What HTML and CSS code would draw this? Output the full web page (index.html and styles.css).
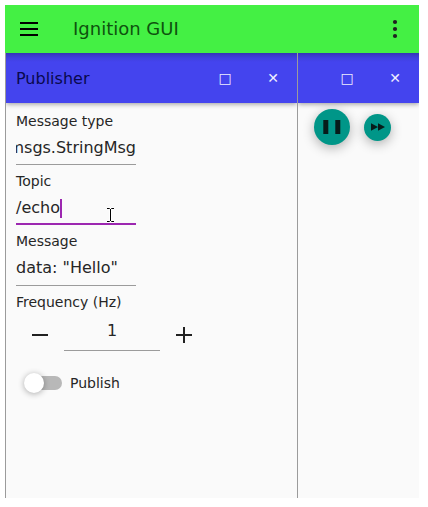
FILE: index.html
```html
<!DOCTYPE html>
<html lang="en">
<head>
<meta charset="utf-8">
<title>Ignition GUI</title>
<link rel="stylesheet" href="styles.css">
</head>
<body>
<div class="window">
  <header class="toolbar">
    <svg class="menu" width="18" height="14" viewBox="0 0 18 14"><path d="M0 0h18v2H0zM0 6h18v2H0zM0 12h18v2H0z"/></svg>
    <h1>Ignition GUI</h1>
    <svg class="more" width="4" height="18" viewBox="0 0 4 18"><circle cx="2" cy="2" r="2.1"/><circle cx="2" cy="9" r="2.1"/><circle cx="2" cy="16" r="2.1"/></svg>
  </header>
  <main class="panels">
    <section class="panel publisher">
      <div class="panel-bar">
        <h2>Publisher</h2>
        <span class="bar-button">□</span>
        <span class="bar-button">✕</span>
      </div>
      <div class="form">
        <label>Message type</label>
        <div class="field clipped"><span>msgs.StringMsg</span></div>
        <label>Topic</label>
        <div class="field focused"><span>/echo</span><i class="caret"></i>
          <svg class="pointer" width="9" height="16" viewBox="0 0 9 16"><path d="M1 1.500h2.500l1 1 1-1H8M4.500 2v12M1 14.500h2.500l1-1 1 1H8" class="halo"/><path d="M1 1.500h2.500l1 1 1-1H8M4.500 2v12M1 14.500h2.500l1-1 1 1H8" class="beam"/></svg>
        </div>
        <label>Message</label>
        <div class="field message"><span>data: "Hello"</span></div>
        <label>Frequency (Hz)</label>
        <div class="spin">
          <svg width="16" height="16" viewBox="0 0 16 16"><path d="M0 7h16v2H0z"/></svg>
          <div class="value">1</div>
          <svg width="16" height="16" viewBox="0 0 16 16"><path d="M0 7h16v2H0zM7 0h2v16H7z"/></svg>
        </div>
        <div class="switch-row"><span class="track"><i class="thumb"></i></span><span>Publish</span></div>
      </div>
    </section>
    <section class="panel">
      <div class="panel-bar">
        <span class="bar-button">□</span>
        <span class="bar-button">✕</span>
      </div>
      <div class="controls">
        <div class="round play"><svg width="18" height="14" viewBox="0 0 18 14"><path d="M.3 0H5.300v14H.3zM12.300 0h5v14h-5z"/></svg></div>
        <div class="round step"><svg width="14" height="8" viewBox="0 0 14 8"><path d="M0 .3L7 4 0 7.700zM7 .3L14 4 7 7.700z"/></svg></div>
      </div>
    </section>
  </main>
</div>
</body>
</html>
```
FILE: styles.css
```css
* { box-sizing: border-box; }
body {
  margin: 0;
  padding: 5px;
  background: #fff;
  color: #262626;
  font: 14px/16px "DejaVu Sans", sans-serif;
}
h1, h2 { margin: 0; font-weight: 400; }
svg { display: block; flex: none; }
.window {
  width: 414px;
  height: 493px;
  display: flex;
  flex-direction: column;
  background: #fafafa;
  overflow: hidden;
}
.toolbar {
  flex: none;
  display: flex;
  align-items: center;
  height: 48px;
  padding: 0 22px 0 15px;
  background: #44f044;
}
.menu { fill: #000; }
.toolbar h1 {
  flex: 1;
  margin-left: 35px;
  font-size: 18px;
  line-height: 22px;
  color: #0e530e;
}
.more { fill: #212121; overflow: visible; }
.panels { display: flex; flex: 1; }
.panel { flex: 1; border-left: 1px solid #9b9b9b; }
.publisher { flex: 0 0 292px; }
.panel-bar {
  display: flex;
  align-items: center;
  justify-content: flex-end;
  height: 50px;
  background: linear-gradient(#3535b4 0, #3a3ac9 2px, #4040de 5px, #4444ee 9px);
  box-shadow: 0 1px 5px rgba(0, 0, 0, .4);
  clip-path: inset(0 0 -12px 0);
}
.panel-bar h2 {
  flex: 1;
  padding: 2px 0 0 10px;
  font-size: 16px;
  line-height: 20px;
  color: #09094f;
}
.bar-button {
  width: 48px;
  text-align: center;
  font-size: 14px;
  color: #eeeeff;
}
.form { padding: 10px 10px 0; }
.form label { display: block; height: 16px; }
.field {
  position: relative;
  display: flex;
  align-items: center;
  width: 120px;
  height: 36px;
  margin-bottom: 8px;
  padding-top: 3px;
  border-bottom: 1px solid #9b9b9b;
  font-size: 16px;
  line-height: 20px;
  white-space: nowrap;
}
.clipped { overflow: hidden; justify-content: flex-end; }
.focused { border-bottom: 2px solid #9c27b0; padding-top: 4px; }
.message { height: 37px; padding-top: 2px; }
.caret { width: 2px; height: 19px; background: #9c27b0; }
.pointer { position: absolute; left: 90px; top: 18px; fill: none; overflow: visible; }
.halo { stroke: #fff; stroke-width: 3; }
.beam { stroke: #000; stroke-width: 1; }
.spin { display: flex; width: 192px; height: 41px; padding: 0 8px 0 16px; align-items: center; }
.spin svg { fill: #212121; position: relative; top: 4px; }
.value {
  width: 96px;
  height: 41px;
  margin: 0 16px;
  border-bottom: 1px solid #9b9b9b;
  font-size: 16px;
  line-height: 42px;
  text-align: center;
}
.switch-row { display: flex; align-items: center; gap: 8px; height: 20px; margin: 22px 0 0 10px; }
.track { position: relative; width: 36px; height: 14px; border-radius: 7px; background: #b8b8b8; }
.thumb {
  position: absolute;
  left: -2px;
  top: -3px;
  width: 20px;
  height: 20px;
  border-radius: 50%;
  background: #fff;
  box-shadow: 0 1px 6px rgba(0, 0, 0, .32);
}
.controls { display: flex; align-items: center; gap: 14px; padding: 6px 16px; }
.round {
  display: flex;
  align-items: center;
  justify-content: center;
  border-radius: 50%;
  background: #009688;
  box-shadow: 0 3px 12px rgba(0, 0, 0, .3);
}
.round svg { fill: #071c1a; }
.play { width: 36px; height: 36px; }
.step { width: 27px; height: 27px; }
```
